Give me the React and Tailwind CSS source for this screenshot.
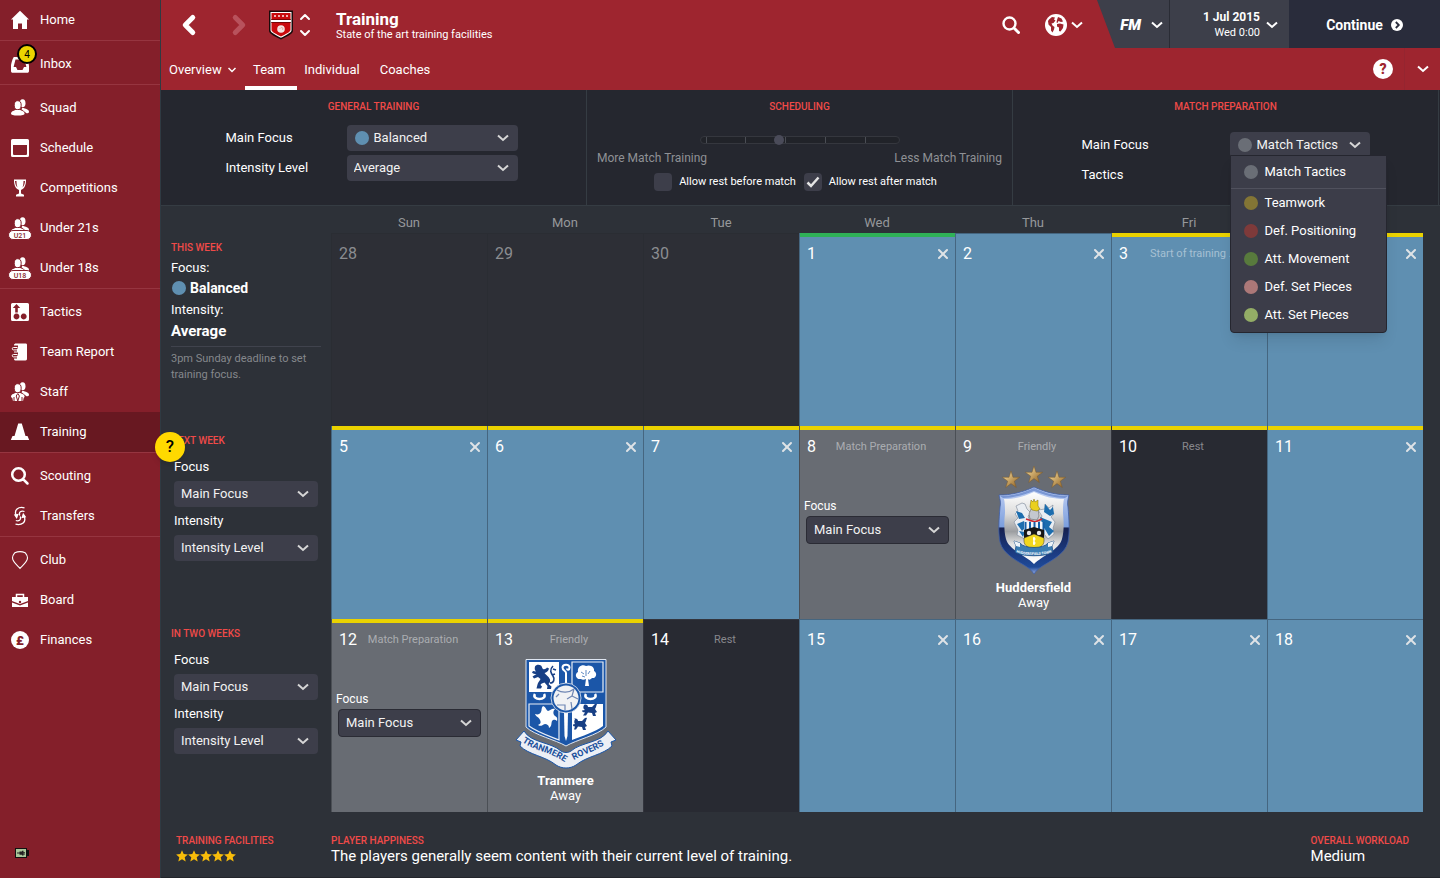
import { useState } from 'react';
import { ChevronDown, ChevronLeft, ChevronRight, ChevronUp, X } from 'lucide-react';

/* ---------- sidebar icons, all on a 20x20 box ---------- */

const People = ({ lift = 0 }) => (
  <g transform={`translate(0 ${-lift})`}>
    <ellipse cx="12.6" cy="5.2" rx="2.9" ry="3.9" />
    <path d="M12.5 9.5c3 1.4 6.500 1.700 6.500 4.500 0 1-1 1.300-2.500 1.300l-5-4z" />
    <ellipse cx="7.700" cy="7.200" rx="3.500" ry="4.500" stroke="#841f2a" strokeWidth="1" />
    <path d="M1 15.500c0-2 2.300-2.600 4.300-3.500h5c2 .900 4.300 1.500 4.300 3.500 0 1.400-2.500 2-6.800 2S1 16.900 1 15.500z" />
  </g>
);

const Squad = ({ tag }) => (
  <svg viewBox="0 0 20 20" fill="#fff" className="h-5 w-5 overflow-visible">
    <People lift={tag ? 2 : 0} />
    {tag && (
      <>
        <rect x="-1.500" y="12.500" width="23" height="9" rx="4.500" stroke="#841f2a" strokeWidth="1" />
        <text x="10" y="19.500" textAnchor="middle" fontSize="7" fontWeight="500" fill="#841f2a">{tag}</text>
      </>
    )}
  </svg>
);

const ICONS = {
  Home: <path d="M10 .8 1 9.500h2V19h5v-5.500h4V19h5V9.500h2z" />,
  Inbox: (
    <path fillRule="evenodd" d="M4 3h12c1 0 3 7 3 9v5c0 1-.600 1.800-1.800 1.800H2.800C1.600 18.800 1 18 1 17v-5c0-2 2-9 3-9zm1.500 2.500L3.600 13H6l1.500 3h5l1.500-3h2.400l-1.900-7.500z" />
  ),
  Schedule: <path fillRule="evenodd" d="M2.500 1h15A1.500 1.500 0 0 1 19 2.500v15a1.500 1.500 0 0 1-1.500 1.500h-15A1.500 1.500 0 0 1 1 17.500v-15A1.500 1.500 0 0 1 2.500 1zM3 7v8.500c0 1 .500 1.500 1.500 1.500h11c1 0 1.500-.500 1.500-1.500V7z" />,
  Competitions: (
    <path fillRule="evenodd" d="M4 1.500h12v1c0 4-1.200 8-5 9.500v3.500l3 1.200V18.500H6v-1.800l3-1.200V12C5.200 10.500 4 6.500 4 2.500zM5 3c.200 3 1 5 2.500 6.500C6.800 7.500 6.500 5.500 6.500 3zm10 0h-1.500c0 2.500-.300 4.500-1 6.500C14 8 14.800 6 15 3z" />
  ),
  Tactics: (
    <path fillRule="evenodd" d="M2.500 1h15A1.500 1.500 0 0 1 19 2.500v15a1.500 1.500 0 0 1-1.500 1.500h-15A1.500 1.500 0 0 1 1 17.500v-15A1.500 1.500 0 0 1 2.500 1zM6.500 2 2.800 6h2.400v4.500h2.600V6h2.400zm0 9.600a2.900 2.900 0 1 0 .01 0zm7.200 0a2.900 2.900 0 1 0 .01 0z" />
  ),
  'Team Report': (
    <>
      <path d="M6 1.500h9.500c1 0 1.500.500 1.500 1.500v13.500c0 1-.500 2-1.500 2H6c-1 0-2-.500-2-1.500V3c0-1 1-1.500 2-1.500z" />
      <path d="M8 5H3.500a1.500 1.500 0 0 0 0 3H7M8 12H3.500a1.500 1.500 0 0 0 0 3H7" fill="none" stroke="#841f2a" strokeWidth="3" />
      <path d="M7.500 5.500h-4a1.200 1.200 0 0 0 0 2.400H7M7.500 12.500h-4a1.200 1.200 0 0 0 0 2.400H7" fill="none" stroke="#fff" strokeWidth="1" />
    </>
  ),
  Staff: (
    <>
      <People lift={1} />
      <path d="M2 14.500 3 19h10l1-4.500z" />
      <path d="M7.800 11.500 6.200 14l1.600 5M7.800 11.500 9.400 14l-1.600 5M4 15v4M12 15v4" fill="none" stroke="#841f2a" strokeWidth="1" />
    </>
  ),
  Training: <path d="M8.200 1.500h3.600L15.500 14h2l1.700 4H.8l1.700-4h2z" />,
  Scouting: <path d="M8.500 8.500m-6.300 0a6.300 6.300 0 1 0 12.600 0a6.300 6.300 0 1 0-12.600 0M13.300 13.300l4.200 4.200" fill="none" stroke="#fff" strokeWidth="2.500" strokeLinecap="round" />,
  Transfers: (
    <>
      <path d="M14.500 1.800C8 .300 4 4 6 9M5.500 18.200C12 19.700 16.500 16 14.200 10.500M9.800 9.500C8.500 6 11 4.500 14.500 5.500M10.300 10.500c1 3.500-1.500 5-4.500 4" fill="none" stroke="#fff" strokeWidth="1.300" />
      <path d="m3.800 8.500 5-.800L6.800 13zM16.300 11.300l-5 .900 1.800-5.400z" />
    </>
  ),
  Club: <path d="M10 18.300c-1.500-2-7.500-6-7.500-10.500 0-2.500 1.500-4 2.300-5 3.200-1.500 7.200-1.500 10.400 0 .800 1 2.300 2.500 2.300 5 0 4.500-6 8.500-7.500 10.500z" fill="none" stroke="#fff" strokeWidth="1.100" />,
  Board: (
    <>
      <path d="M6.500 7V4.500h7V7" fill="none" stroke="#fff" strokeWidth="1.500" />
      <path d="M2 7h16v4l-8 3-8-3zM2 12.500l8 3 8-3V17H2z" />
      <circle cx="10" cy="12" r="1.200" fill="#841f2a" />
    </>
  ),
  Finances: (
    <>
      <circle cx="10" cy="10" r="9" />
      <text x="10" y="14.500" textAnchor="middle" fontSize="13" fontWeight="900" fill="#841f2a">£</text>
    </>
  ),
};

const NAV_GROUPS = [
  ['Home'],
  ['Inbox'],
  ['Squad', 'Schedule', 'Competitions', 'Under 21s', 'Under 18s'],
  ['Tactics', 'Team Report', 'Staff', 'Training'],
  ['Scouting', 'Transfers'],
  ['Club', 'Board', 'Finances'],
];

function NavIcon({ name }) {
  if (name === 'Squad') return <Squad />;
  if (name === 'Under 21s') return <Squad tag="U21" />;
  if (name === 'Under 18s') return <Squad tag="U18" />;
  return <svg viewBox="0 0 20 20" fill="#fff" className="h-5 w-5">{ICONS[name]}</svg>;
}

function Sidebar() {
  return (
    <nav className="relative flex w-[161px] shrink-0 flex-col border-r border-[#2f3a42] bg-[#841f2a]">
      {NAV_GROUPS.map((group, g) => (
        <ul key={g} className={g === 0 ? '' : 'border-t border-[#963540] pt-[3px]'}>
          {group.map((name) => (
            <li key={name}>
              <a
                href="#"
                className={`flex h-10 items-center gap-2.5 pl-2.5 ${name === 'Training' ? 'bg-[#681821]' : ''}`}
              >
                <span className="relative">
                  <NavIcon name={name} />
                  {name === 'Inbox' && (
                    <span className="absolute -top-2.5 left-[7px] flex h-5 w-5 items-center justify-center rounded-full border-2 border-black bg-[#ecd400] text-[10px] text-black">
                      4
                    </span>
                  )}
                </span>
                {name}
              </a>
            </li>
          ))}
        </ul>
      ))}
      <svg viewBox="0 0 14 10" className="mt-auto mb-5 ml-[15px] h-2.5 w-3.5">
        <path d="M0 0h12v2h2v6h-2v2H0z" fill="#111" />
        <path d="M1 1h10v8H1z" fill="#a9c79a" />
        <path d="M2 4.600h2.500V3.500H7V2.800h1.500V4H10v.8H8.500v.8H10v.8H8.500v1H7v-.7H4.500V5.400H2z" fill="#222" />
      </svg>
      <button
        aria-label="Help"
        className="absolute top-[432px] -right-[25px] z-10 flex h-[30px] w-[30px] items-center justify-center rounded-full bg-[#ffd900] text-[17px] font-medium text-black shadow-md"
      >
        ?
      </button>
    </nav>
  );
}

/* ---------- header ---------- */

const ClubBadge = () => (
  <svg viewBox="0 0 26 30" className="h-[30px] w-[26px]">
    <path d="M1 .5h24V21c0 3-7 6-12 8.500C8 27 1 24 1 21z" fill="#1a0a0a" />
    <path d="M2.500 2h21v18.500c0 2-6 5-10.500 7.300C8.500 25.500 2.500 22.500 2.500 20.500z" fill="#fff" />
    <path d="M3.500 3h19v17c0 2-5.500 4.500-9.500 6.600C9 24.500 3.500 22 3.500 20z" fill="#c90a0d" />
    <path d="M6 6h14" stroke="#f0b0b0" strokeWidth="1.800" strokeDasharray="2 2" />
    <path d="M3 11h20" stroke="#fff" strokeWidth="2" />
    <path d="M3 9.500h20M3 12.500h20" stroke="#400" strokeWidth=".6" />
    <circle cx="13" cy="19" r="3.800" fill="#f3e4e2" />
    <path d="m11.500 19 1.500-1.500 2 .5-.5 2" fill="none" stroke="#d98" strokeWidth=".7" />
  </svg>
);

const Globe = () => (
  <svg viewBox="0 0 22 22" className="h-[22px] w-[22px]">
    <circle cx="11" cy="11" r="11" fill="#fff" />
    <path
      d="M4 5.500 7 3l3 .500-1 2 1.500 1-2 2.500-2 .500 1 2 2 1.500-.500 2.500-1.500 3-1.500-2V13L3.500 10.500 3 7zM13 3l3.500 1.500 1.500 3-2 .500-2.500-1-1 2-1-.500.500-2.500zM12 10l3-.500 3.500 1-.500 3.500-2.500 3.500-1.500-.500v-3.500l-2-1z"
      fill="#9e252f"
    />
  </svg>
);

const SearchIcon = () => (
  <svg viewBox="0 0 18 18" className="h-[18px] w-[18px]" fill="none" stroke="#fff" strokeLinecap="round">
    <circle cx="7.500" cy="7.500" r="6" strokeWidth="2.400" />
    <path d="m12.500 12.500 4 4" strokeWidth="3" />
  </svg>
);

const Caret = ({ className = 'text-white' }) => (
  <svg viewBox="0 0 12 8" className={`h-2 w-3 ${className}`} fill="none" stroke="currentColor" strokeWidth="2">
    <path d="m1 1.500 5 4.500 5-4.500" />
  </svg>
);

function TopBar() {
  return (
    <div className="flex h-12 items-stretch">
      <div className="flex flex-1 items-center pt-0.5 pl-[13px]">
        <button aria-label="Back" className="text-white"><ChevronLeft size={30} strokeWidth={4} /></button>
        <button aria-label="Forward" className="ml-5 text-[#b8525c]"><ChevronRight size={30} strokeWidth={4} /></button>
        <span className="ml-3.5"><ClubBadge /></span>
        <span className="ml-[3px] flex flex-col text-white">
          <button aria-label="Previous club"><ChevronUp size={16} strokeWidth={3} /></button>
          <button aria-label="Next club"><ChevronDown size={16} strokeWidth={3} /></button>
        </span>
        <div className="ml-[23px]">
          <h1 className="text-[17px] leading-5 font-bold">Training</h1>
          <p className="text-[11px] leading-3">State of the art training facilities</p>
        </div>
        <button aria-label="Search" className="ml-auto"><SearchIcon /></button>
        <button aria-label="World" className="mr-3.5 ml-[25px] flex items-center gap-1">
          <Globe />
          <Caret />
        </button>
      </div>
      <div className="flex items-stretch bg-[#3d3f4a] [clip-path:polygon(0_0,100%_0,100%_100%,18px_100%)]">
        <button className="flex w-[72px] items-center justify-end gap-2.5 pt-0.5 pr-1.5">
          <span className="text-[15px] font-black italic">FM</span>
          <Caret />
        </button>
        <button className="flex w-[120px] items-center justify-end gap-1.5 border-l border-[#2a2c35] pt-0.5 pr-[11px] text-right">
          <span className="block">
            <span className="block text-[12px] leading-4 font-bold">1 Jul 2015</span>
            <span className="block text-[11px] leading-4">Wed 0:00</span>
          </span>
          <Caret />
        </button>
        <button className="flex w-[151px] items-center justify-center gap-2 bg-[#292c3b] pt-0.5 text-[14px] font-bold">
          Continue
          <svg viewBox="0 0 12 12" className="h-3 w-3">
            <circle cx="6" cy="6" r="6" fill="#fff" />
            <path d="M4.800 3 7.800 6l-3 3" fill="none" stroke="#292c3b" strokeWidth="1.800" />
          </svg>
        </button>
      </div>
    </div>
  );
}

function Tabs() {
  return (
    <div className="flex h-[42px] items-stretch justify-between">
      <div className="flex items-stretch">
        <a href="#" className="flex w-[84px] items-center gap-1.5 pt-0.5 pl-2">
          Overview
          <svg viewBox="0 0 8 6" className="h-1.5 w-2" fill="none" stroke="#fff" strokeWidth="1.500"><path d="m.5 1 3.500 3.500L7.500 1" /></svg>
        </a>
        <a href="#" className="flex w-[52px] items-center border-b-4 border-white pt-1.5 pl-2">Team</a>
        <a href="#" className="flex w-[70px] items-center justify-center pt-0.5">Individual</a>
        <a href="#" className="flex w-[76px] items-center justify-center pt-0.5">Coaches</a>
      </div>
      <div className="flex items-center">
        <button aria-label="Page help" className="mr-[11px] flex h-5 w-5 items-center justify-center rounded-full bg-white text-[14px] font-black text-[#9e252f]">?</button>
        <button aria-label="More" className="flex h-full w-9 items-center justify-center border-l border-[#952530]"><Caret /></button>
      </div>
    </div>
  );
}

/* ---------- form bits ---------- */

const DOT_COLORS = {
  Balanced: 'bg-[#5f8fb1]',
  'Match Tactics': 'bg-[#6a6e76]',
  Teamwork: 'bg-[#837535]',
  'Def. Positioning': 'bg-[#7e3a3a]',
  'Att. Movement': 'bg-[#587a3d]',
  'Def. Set Pieces': 'bg-[#ac7878]',
  'Att. Set Pieces': 'bg-[#93ad66]',
};

const FOCUS_OPTIONS = Object.keys(DOT_COLORS).slice(1);

const Dot = ({ name, className = '' }) => (
  <span className={`h-3.5 w-3.5 shrink-0 rounded-full ${DOT_COLORS[name]} ${className}`} />
);

function Select({ id, label, options, dot, value, onChange, className = '', frame = 'h-[26px] rounded-sm' }) {
  return (
    <div className={`relative flex items-center ${className}`}>
      <select
        id={id}
        aria-label={label}
        value={value}
        onChange={onChange}
        className={`w-full appearance-none bg-[#3d3e4a] text-[#f2f2f2] ${frame} ${dot ? 'pl-[27px]' : 'pl-[7px]'}`}
      >
        {options.map((o) => <option key={o}>{o}</option>)}
      </select>
      {dot && <Dot name={dot} className="pointer-events-none absolute left-2" />}
      <Caret className="pointer-events-none absolute right-[9px] text-[#d6d6d6]" />
    </div>
  );
}

const Heading = ({ children, className = '' }) => (
  <h2 className={`text-[10px] leading-4 font-medium text-[#f04a48] uppercase ${className}`}>{children}</h2>
);

function Checkbox({ label, defaultChecked }) {
  return (
    <label className="flex items-center gap-[7px] text-[11px]">
      <span className="relative flex">
        <input type="checkbox" defaultChecked={defaultChecked} className="peer h-[18px] w-[18px] appearance-none rounded-sm bg-[#3d3e4a]" />
        <svg viewBox="0 0 18 18" className="pointer-events-none absolute inset-0 hidden peer-checked:block" fill="none" stroke="#e4e4e4" strokeWidth="2.500">
          <path d="m3.500 9.500 3.500 3.500 7.500-8.500" />
        </svg>
      </span>
      {label}
    </label>
  );
}

/* ---------- settings strip ---------- */

function Settings() {
  const [focus, setFocus] = useState('Match Tactics');
  const [pace, setPace] = useState(39);

  return (
    <section className="grid h-[116px] grid-cols-3 border-b border-[#353c43] bg-[#25272f] pr-px">
      <div className="border-r border-[#353c43] pt-[9px]">
        <Heading className="text-center">General Training</Heading>
        <div className="mx-auto mt-2.5 flex w-[296px] flex-col gap-1 pr-1">
          <div className="flex items-center">
            <label htmlFor="main-focus" className="w-[121px]">Main Focus</label>
            <Select id="main-focus" options={['Balanced']} dot="Balanced" className="flex-1" />
          </div>
          <div className="flex items-center">
            <label htmlFor="intensity" className="w-[121px]">Intensity Level</label>
            <Select id="intensity" options={['Average']} className="flex-1" />
          </div>
        </div>
      </div>

      <div className="border-r border-[#353c43] px-2.5 pt-[9px]">
        <Heading className="text-center">Scheduling</Heading>
        <div className="relative mx-auto mt-[19px] flex h-3 w-[200px] items-center">
          <div className="absolute inset-x-0 flex h-2 items-stretch justify-between rounded-full border border-[#35373e] bg-[#212329] pr-[33px] pl-[5px]">
            {[0, 1, 2, 3, 4].map((i) => <span key={i} className="w-px bg-[#4a4d54]" />)}
          </div>
          <input
            type="range"
            aria-label="Match training balance"
            value={pace}
            onChange={(e) => setPace(Number(e.target.value))}
            className="relative h-3 w-full appearance-none bg-transparent [&::-webkit-slider-thumb]:h-2.5 [&::-webkit-slider-thumb]:w-2.5 [&::-webkit-slider-thumb]:appearance-none [&::-webkit-slider-thumb]:rounded-full [&::-webkit-slider-thumb]:bg-[#4a4b59]"
          />
        </div>
        <div className="mt-1 flex justify-between text-[12px] leading-4 text-[#8f9195]">
          <span>More Match Training</span>
          <span>Less Match Training</span>
        </div>
        <div className="mt-[7px] flex justify-center gap-2 pr-2">
          <Checkbox label="Allow rest before match" />
          <Checkbox label="Allow rest after match" defaultChecked />
        </div>
      </div>

      <div className="border-r border-[#353c43] pt-[9px]">
        <Heading className="text-center">Match Preparation</Heading>
        <div className="mx-auto mt-[17px] flex w-[288px] items-center">
          <label htmlFor="prep-focus" className="w-[148px]">Main Focus</label>
          <div className="relative">
            <Select
              id="prep-focus"
              options={FOCUS_OPTIONS}
              dot={focus}
              value={focus}
              onChange={(e) => setFocus(e.target.value)}
              className="w-[140px]"
            />
            <ul className="absolute top-[23px] left-0 z-10 w-[157px] rounded-b border border-[#25262f] bg-[#3c3d49] pb-[3px] shadow-lg">
              {FOCUS_OPTIONS.map((o, i) => (
                <li key={o} className={i === 0 ? 'border-b border-[#50515d] py-0.5' : ''}>
                  <button onClick={() => setFocus(o)} className="flex h-7 w-full items-center gap-[7px] pl-[13px] text-white">
                    <Dot name={o} />
                    {o}
                  </button>
                </li>
              ))}
            </ul>
          </div>
        </div>
        <p className="mx-auto mt-[7px] w-[288px]">Tactics</p>
      </div>
    </section>
  );
}

/* ---------- club crests ---------- */

const HuddersfieldCrest = () => (
  <svg viewBox="0 0 74 110" className="h-[110px] w-[74px]">
    <defs>
      <linearGradient id="hudRim" x1="0" y1="0" x2="0" y2="1">
        <stop offset="0" stopColor="#c3d2f4" />
        <stop offset=".46" stopColor="#7b9edd" />
        <stop offset=".47" stopColor="#16204f" />
        <stop offset=".75" stopColor="#1b3a80" />
        <stop offset=".92" stopColor="#1f4a98" />
        <stop offset="1" stopColor="#9db2e4" />
      </linearGradient>
      <linearGradient id="hudFace" x1="0" y1="0" x2="0" y2="1">
        <stop offset="0" stopColor="#fff" />
        <stop offset=".3" stopColor="#dcdcdc" />
        <stop offset=".55" stopColor="#9c9ea1" />
        <stop offset=".72" stopColor="#e2e2e2" />
        <stop offset="1" stopColor="#fff" />
      </linearGradient>
      <linearGradient id="hudGold" x1="0" y1="0" x2="1" y2="1">
        <stop offset="0" stopColor="#ffe7a8" />
        <stop offset="1" stopColor="#8a5a1c" />
      </linearGradient>
    </defs>
    {[[14, 14], [37, 9], [60, 14]].map(([x, y]) => (
      <path
        key={x}
        transform={`translate(${x} ${y})`}
        d="m0-9 2 6.300 6.600 0-5.300 3.900L5.300 7.500 0 3.600l-5.300 3.900 2-6.300-5.300-3.900 6.600 0z"
        fill="url(#hudGold)"
        stroke="#7d5a2a"
        strokeWidth=".5"
      />
    ))}
    <path d="M2 29c11 0 22-2 35-8 13 6 24 8 35 8-1 4-2 8-1 12 1 12 2 25 0 35-3 13-20 20-27 25-3 2-5 4-7 7-2-3-4-5-7-7C23 96 6 89 3 76 1 66 2 53 3 41c1-4 0-8-1-12z" fill="url(#hudRim)" stroke="#3d5ea8" strokeWidth=".8" />
    <path d="M3 30c11 0 21-2 34-8 13 6 23 8 34 8l-3 2c-11 0-20-3-31-7-11 4-20 7-31 7z" fill="#3c64b8" opacity=".5" />
    <path d="M7 33c10 0 19-2 30-7 11 5 20 7 30 7-1 4-1 10-1 14 1 9 1 19-1 26-3 11-20 17-28 25-8-8-25-14-28-25-2-7-2-17-1-26 0-4 0-10-1-14z" fill="url(#hudFace)" />
    {/* mantling and helmet */}
    <path d="m25 37-6 3 2 5-3 3 3 4-4 4 4 8-1 5 8 4 6-14-3-9 3-3-4-4-2-5zM48 38l4 4 4-3-1 5 2 4-3 3 4 5-2 6 1 6-6 5-10-13 4-10-4-6 7-1z" fill="#e9edf2" stroke="#788495" strokeWidth=".6" />
    <path d="m19 45 6 2 3 5-6 1zM20 58l7-3 2 6-4 4zM48 38l5 6 3-3 1 7-4 2-6-4zM43 51l12 5-3 5 5 4-5 5-6-10zM22 65l6 1-2 5z" fill="#1c6dae" />
    <path d="m34 43 3-2 4 2 1 7-2 4-7-1-1-5z" fill="#c4c8cf" stroke="#555" strokeWidth=".5" />
    <path d="m34 34 2 2 1-3 1 3 3-2v6l2 3-3 2-5-1-2-3z" fill="#ead01e" stroke="#7b6a08" strokeWidth=".5" />
    <path d="m29 53 9 3 7-3" fill="none" stroke="#cc2430" strokeWidth="1.500" />
    <path d="M27 56h20v12H27z" fill="#f4f6f9" />
    <path d="M28.500 56v12M33 56v12M37.500 56v12M42 56v12M46.500 56v12" stroke="#145fa8" strokeWidth="2" />
    <path d="M27 64l10-3 10 3v11H27z" fill="#161616" />
    <circle cx="32" cy="67" r="2.200" fill="#e6e6e6" />
    <circle cx="42" cy="67" r="2.200" fill="#e6e6e6" />
    <path d="M27 72l10-4 10 4v3c0 5-5 7-10 9-5-2-10-4-10-9z" fill="#f1d71e" stroke="#333" strokeWidth=".5" />
    <path d="M37 71v8M36 73h2.500M36 77h2.500" stroke="#fff" strokeWidth="1.500" />
    {/* motto ribbon */}
    <path d="m17 75 6 2c4 6 24 6 28 0l6-2-2 5 1 6c-6 5-32 5-38 0l1-6z" fill="#3b7db3" stroke="#1a4b84" strokeWidth=".8" />
    <path d="m17 75 6 2v4l-4-1zM57 75l-6 2v4l4-1z" fill="#eef3f8" />
    <path id="hudMotto" d="M19 86c8 4 28 4 36 0" fill="none" />
    <text fontSize="3.500" fontWeight="700" fill="#fff">
      <textPath href="#hudMotto" startOffset="50%" textAnchor="middle">HUDDERSFIELD TOWN</textPath>
    </text>
  </svg>
);

const TranmereCrest = () => (
  <svg viewBox="0 0 102 110" className="h-[110px] w-[102px]">
    <path d="M11 .5h80v67.500c-8 8-30 13-40 19C41 81 19 76 11 68z" fill="#1b56a8" stroke="#dfe6f1" strokeWidth="1" />
    <path d="M14 3h30v30H14zM57 45h31v22c-8 6-21 10-31 14z" fill="#fff" />
    <path d="M14 45h30v36C34 77 22 73 14 67zM57 3h31v30H57z" fill="#1b56a8" stroke="#e9eef6" strokeWidth="1.200" />
    {/* rampant lion */}
    <path d="M20 7.500c1-2 4-2.500 6-1 1 1 1 2.500 2 3.500 1.500.500 3 0 4-1.500l2 1c-.500 2.500-2.500 4-4.500 4.500 1.500 2 4.500 3.500 5.500 6.500.500 2-.500 3.500-1.500 4.500l3 2.500-.500 2.500h-4l.500-3-3-3.500c-2 .500-3.500 1-4 2.500l1.500 1.500-1 2h-4.500l1-4c.500-2 2-3.500 3-5.500l-2.500-2-4 1.500-1.500-2 4-2.500c-2 0-3.500 0-4.500-1.500l1-1.500 3 .500c-1.500-1.500-1.500-3-1-5z" fill="#173f85" />
    <path d="M35 24c4 0 5-4 3-7s-4-6 0-10M38 10l3 1M37 16l3-1" fill="none" stroke="#173f85" strokeWidth="1.600" />
    {/* tree */}
    <path d="M66 20c-5 1-7-5-3-7-1-5 4-8 8-6 5-2 9 2 8 5 4 2 2 8-2 7-2 2-3 2-4 1l1 7h-4l1-7c-2 1-4 1-5 0z" fill="#fff" />
    <path d="M66 13l3 2M75 12l-2 3M71 11v6M67 17l3 1" stroke="#1b56a8" strokeWidth=".7" />
    {/* crozier */}
    <path d="M51 26V14c0-2.500-3.500-2-3.500-5.500s7-4 7 0c0 2.500-2.500 3-2.500 1" fill="none" stroke="#fff" strokeWidth="2" />
    <path d="M49 53h4l-.500 24L51 82l-1.500-5z" fill="#fff" />
    {/* horns */}
    <path d="M20 35c-4 6.500 13 6.500 9 0M71 35c-4 6.500 13 6.500 9 0" fill="none" stroke="#fff" strokeWidth="2.500" />
    {/* swirling sun */}
    <path d="M28 47c3 1 3 4 5 5 2 0 4-3 7-2-2 2-2 4-1 6 2 2 4 2 3 6-2-2-4-1-5 0-1 3 0 5-3 7 0-3-2-4-4-4-3 1-4 3-7 1 3-1 3-3 2-5-1-3-4-3-5-6 3 1 5 0 6-2s0-4 2-6z" fill="#fff" />
    {/* pair of lions */}
    <path d="M69 46c2-1 4 0 4 2l4 0c2-1 2-4 5-3-1 2-1 4-2 5l2 3-2 1 1 3h-3l-1-3-4-.500-2 3h-3l2-3c-2 0-3-1-3-2l3-.500c-2-1-2-3-1-5zM59 60c2-1 4 0 4 2l4 0c2-1 2-4 5-3-1 2-1 4-2 5l2 3-2 1 1 3h-3l-1-3-4-.500-2 3h-2l1-3c-2 0-2-1-2-2l2-.500c-1-1-1-3 0-5z" fill="#173f85" />
    {/* ball */}
    <circle cx="51" cy="39" r="15" fill="#1b56a8" stroke="#e6ebf4" strokeWidth=".8" />
    <circle cx="51" cy="39" r="12.500" fill="#f1f2f4" />
    <path d="M42 31c5 3 12 3 17-1M59 30l-2 7 6 3M41 38l3-3M57 37l-5 3M57 50l-1-7M42 46h8v5" fill="none" stroke="#6f86b3" strokeWidth="1.200" />
    {/* name scroll */}
    <path d="M9 72c7 12 27 11 37 20 3 2 7 2 10 0 10-9 30-8 37-20l8 9-5 2 1 4c-9 9-25 10-36 19-6 4-14 4-20 0C30 97 14 96 5 87l1-4-5-2z" fill="#eceff5" stroke="#1b56a8" strokeWidth="1" />
    <path id="tranLeft" d="M7 83C20 92 36 93 51 104" fill="none" />
    <path id="tranRight" d="M57 102C70 94 84 92 97 80" fill="none" />
    <g fontSize="9" fontWeight="700" fill="#1b4f9c">
      <text><textPath href="#tranLeft">TRANMERE</textPath></text>
      <text><textPath href="#tranRight" startOffset="2">ROVERS</textPath></text>
    </g>
  </svg>
);

const CRESTS = { Huddersfield: HuddersfieldCrest, Tranmere: TranmereCrest };

/* ---------- calendar ---------- */

const DAYS = ['Sun', 'Mon', 'Tue', 'Wed', 'Thu', 'Fri', 'Sat'];

const CELL_STYLES = {
  past: 'bg-[#2d2f36] border-[#2a2d33] text-[#8b8d91]',
  train: 'bg-[#5f8fb1] border-[#456680] text-white',
  match: 'bg-[#686c73] border-[#4b4f55] text-white',
  rest: 'bg-[#282a32] border-[#33353d] text-white',
};

const BARS = { green: 'bg-[#2fb157]', yellow: 'bg-[#ead200]' };

const WEEKS = [
  [
    { day: 28, type: 'past' },
    { day: 29, type: 'past' },
    { day: 30, type: 'past' },
    { day: 1, type: 'train', bar: 'green' },
    { day: 2, type: 'train' },
    { day: 3, type: 'train', bar: 'yellow', title: 'Start of training …' },
    { day: 4, type: 'train', bar: 'yellow' },
  ],
  [
    { day: 5, type: 'train', bar: 'yellow' },
    { day: 6, type: 'train', bar: 'yellow' },
    { day: 7, type: 'train', bar: 'yellow' },
    { day: 8, type: 'match', bar: 'yellow', title: 'Match Preparation', prep: true },
    { day: 9, type: 'match', bar: 'yellow', title: 'Friendly', club: 'Huddersfield' },
    { day: 10, type: 'rest', bar: 'yellow', title: 'Rest' },
    { day: 11, type: 'train', bar: 'yellow' },
  ],
  [
    { day: 12, type: 'match', bar: 'yellow', title: 'Match Preparation', prep: true },
    { day: 13, type: 'match', bar: 'yellow', title: 'Friendly', club: 'Tranmere' },
    { day: 14, type: 'rest', title: 'Rest' },
    { day: 15, type: 'train' },
    { day: 16, type: 'train' },
    { day: 17, type: 'train' },
    { day: 18, type: 'train' },
  ],
];

function DayCell({ day, type, bar, title, prep, club }) {
  const Crest = CRESTS[club];
  return (
    <div className={`flex flex-col border-l ${bar ? '' : 'border-t pt-[3px]'} ${CELL_STYLES[type]}`}>
      {bar && <div className={`h-1 ${BARS[bar]}`} />}
      <div className="flex h-8 items-center pt-0.5 pr-1 pl-[7px]">
        <span className="w-5 text-[16px]">{day}</span>
        <span className="flex-1 text-center text-[11px] whitespace-nowrap text-white/45">{title}</span>
        {type === 'train' ? (
          <button aria-label={`Clear day ${day}`} className="text-[#dfe3e6]"><X size={16} strokeWidth={3} /></button>
        ) : (
          <span className="w-4" />
        )}
      </div>
      {prep && (
        <div className="mt-[34px] pr-1.5 pl-1">
          <label htmlFor={`prep-${day}`} className="block text-[12px] leading-5">Focus</label>
          <Select id={`prep-${day}`} options={['Main Focus']} className="ml-0.5" frame="h-7 rounded border border-[#2a2b34]" />
        </div>
      )}
      {club && (
        <div className="mt-1 flex flex-col items-center leading-[15px]">
          <Crest />
          <strong className="mt-1">{club}</strong>
          <span>Away</span>
        </div>
      )}
    </div>
  );
}

function ThisWeek() {
  return (
    <div className="px-2.5 pt-[7px]">
      <Heading>This Week</Heading>
      <p className="mt-0.5 leading-5">Focus:</p>
      <p className="flex items-center gap-1 text-[14px] leading-5 font-bold">
        <Dot name="Balanced" className="ml-px" />
        Balanced
      </p>
      <p className="mt-0.5 leading-5">Intensity:</p>
      <p className="border-b border-[#40434d] pb-1 text-[15px] leading-[22px] font-bold">Average</p>
      <p className="mt-1 text-[11px] leading-4 text-[#85888c]">3pm Sunday deadline to set training focus.</p>
    </div>
  );
}

function WeekForm({ name }) {
  const id = name.replaceAll(' ', '-').toLowerCase();
  return (
    <div className="pt-[7px] pr-[13px] pl-2.5">
      <Heading>{name}</Heading>
      <div className="pt-2 pl-[3px]">
        <label htmlFor={`${id}-focus`} className="block h-6 leading-5">Focus</label>
        <Select id={`${id}-focus`} options={['Main Focus']} />
        <label htmlFor={`${id}-intensity`} className="mt-1 block h-6 leading-5">Intensity</label>
        <Select id={`${id}-intensity`} options={['Intensity Level']} />
      </div>
    </div>
  );
}

function Calendar() {
  return (
    <section className="grid flex-1 grid-cols-[170px_repeat(7,minmax(0,1fr))] grid-rows-[27px_repeat(3,1fr)] pr-[17px]">
      <span />
      {DAYS.map((d) => (
        <span key={d} className="pt-[7px] text-center leading-5 text-[#96989b]">{d}</span>
      ))}
      <ThisWeek />
      {WEEKS[0].map((c) => <DayCell key={c.day} {...c} />)}
      <WeekForm name="Next Week" />
      {WEEKS[1].map((c) => <DayCell key={c.day} {...c} />)}
      <WeekForm name="In Two Weeks" />
      {WEEKS[2].map((c) => <DayCell key={c.day} {...c} />)}
    </section>
  );
}

function Footer() {
  return (
    <footer className="flex h-[66px] border-b border-[#23252b] pt-[21px] pr-[31px] pl-[15px]">
      <div className="w-[155px]">
        <Heading>Training Facilities</Heading>
        <div className="flex pt-px" role="img" aria-label="5 stars">
          {[0, 1, 2, 3, 4].map((i) => (
            <svg key={i} viewBox="0 0 12 12" className="h-3 w-3" fill="#f8bd0a">
              <path d="m6 .2 1.700 3.900 4.200.4-3.200 2.800 1 4.200L6 9.300l-3.700 2.200 1-4.200L.1 4.500l4.200-.400z" />
            </svg>
          ))}
        </div>
      </div>
      <div className="flex-1">
        <Heading>Player Happiness</Heading>
        <p className="text-[15px] leading-[14px]">The players generally seem content with their current level of training.</p>
      </div>
      <div>
        <Heading>Overall Workload</Heading>
        <p className="text-[15px] leading-[14px]">Medium</p>
      </div>
    </footer>
  );
}

export default function App() {
  return (
    <div className="flex min-h-screen bg-[#2d3138] font-['Roboto','Liberation_Sans',sans-serif] text-[13px] text-white">
      <Sidebar />
      <div className="flex min-w-0 flex-1 flex-col">
        <header className="bg-[#9e252f]">
          <TopBar />
          <Tabs />
        </header>
        <Settings />
        <Calendar />
        <Footer />
      </div>
    </div>
  );
}
